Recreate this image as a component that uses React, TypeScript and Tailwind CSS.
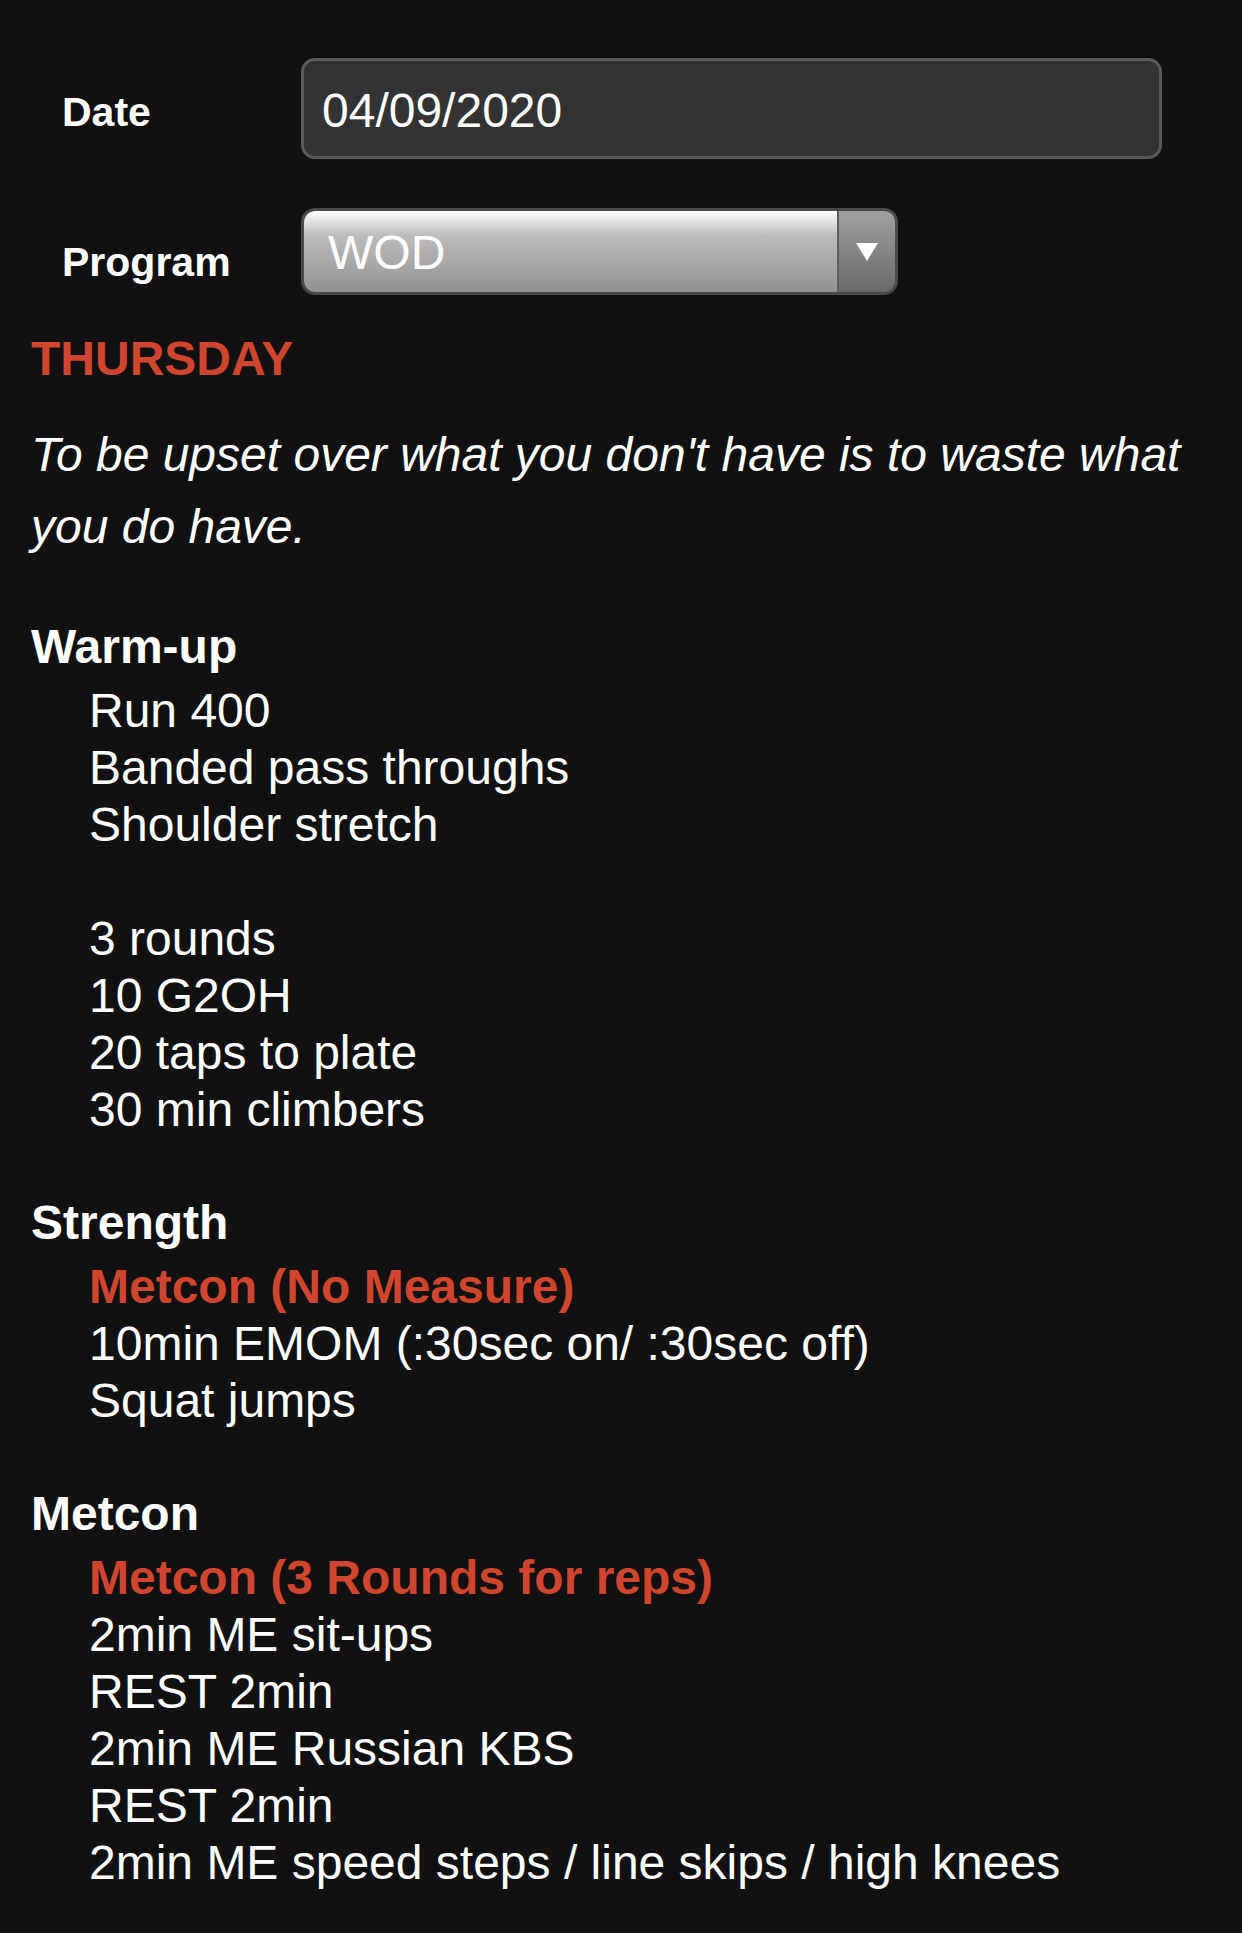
import React from "react";

type Section = {
  title: string;
  subtitle?: string;
  lines: string[];
};

const sections: Section[] = [
  {
    title: "Warm-up",
    lines: [
      "Run 400",
      "Banded pass throughs",
      "Shoulder stretch",
      "",
      "3 rounds",
      "10 G2OH",
      "20 taps to plate",
      "30 min climbers",
    ],
  },
  {
    title: "Strength",
    subtitle: "Metcon (No Measure)",
    lines: ["10min EMOM (:30sec on/ :30sec off)", "Squat jumps"],
  },
  {
    title: "Metcon",
    subtitle: "Metcon (3 Rounds for reps)",
    lines: [
      "2min ME sit-ups",
      "REST 2min",
      "2min ME Russian KBS",
      "REST 2min",
      "2min ME speed steps / line skips / high knees",
    ],
  },
];

function DateField({ value }: { value: string }) {
  return (
    <div className="flex h-[101px] w-[861px] items-center rounded-[14px] border-[3px] border-[#5a5a5a] bg-[#333333] pl-[18px] pt-[4px] text-[48px] leading-none text-white">
      {value}
    </div>
  );
}

function ProgramSelect({ value }: { value: string }) {
  return (
    <div className="flex h-[87px] w-[597px] overflow-hidden rounded-[14px] border-[3px] border-[#4a4a4a] bg-[#4a4a4a]">
      <div className="flex flex-1 items-center rounded-l-[11px] bg-gradient-to-b from-[#ffffff] via-[#bcbcbc] via-30% to-[#939393] pl-[24px] pt-[2px] text-[48px] leading-none text-white">
        {value}
      </div>
      <div className="flex w-[58px] items-center justify-center border-l-[2px] border-[#5e5e5e] bg-gradient-to-b from-[#a0a0a0] to-[#696969]">
        <svg width="22" height="18" viewBox="0 0 22 18">
          <polygon points="0,0 22,0 11,18" fill="#ffffff" />
        </svg>
      </div>
    </div>
  );
}

export default function App() {
  return (
    <div
      className="min-h-[1933px] w-full bg-[#111111] text-white"
      style={{ fontFamily: '"Liberation Sans", Arial, Helvetica, sans-serif' }}
    >
      <div className="pt-[58px]">
        <div className="flex pl-[62px]">
          <div className="mt-[31px] w-[239px] text-[41px] font-bold leading-[46px]">Date</div>
          <DateField value="04/09/2020" />
        </div>
        <div className="mt-[49px] flex pl-[62px]">
          <div className="mt-[31px] w-[239px] text-[41px] font-bold leading-[46px]">Program</div>
          <ProgramSelect value="WOD" />
        </div>
      </div>

      <div className="pl-[31px] pr-[30px] pb-[40px]">
        <h1 className="mt-[35px] text-[48px] font-bold leading-[57px] text-[#cf4530]">THURSDAY</h1>
        <p className="mt-[32px] text-[48px] italic leading-[72px]">
          To be upset over what you don't have is to waste what you do have.
        </p>

        {sections.map((s, i) => (
          <section key={s.title} className={i === 0 ? "mt-[55px]" : "mt-[56px]"}>
            <h2 className="text-[48px] font-bold leading-[57px]">{s.title}</h2>
            <div className="mt-[7px] pl-[58px] text-[48px] leading-[57px]">
              {s.subtitle && <div className="font-bold text-[#cf4530]">{s.subtitle}</div>}
              {s.lines.map((line, j) => (
                <div key={j} className="h-[57px] whitespace-nowrap">
                  {line}
                </div>
              ))}
            </div>
          </section>
        ))}
      </div>
    </div>
  );
}
